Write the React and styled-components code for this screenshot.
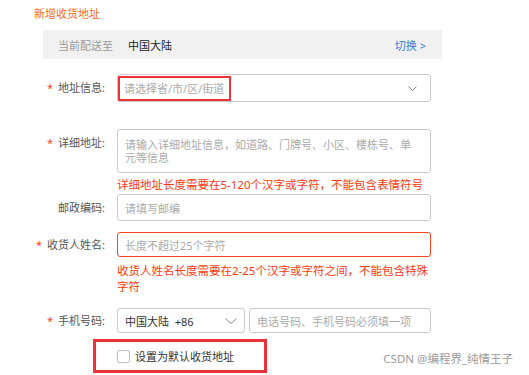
import React from 'react'
import styled, { createGlobalStyle } from 'styled-components'

const GlobalStyle = createGlobalStyle`
    body{
        margin: 0;
        background: #ffffff;
        font-family: "Noto Sans", "Noto Sans CJK SC", sans-serif;
    }
`

const Page = styled.div`
    position: relative;
    width: 529px;
    height: 375px;
    overflow: hidden;
    padding-top: 6px;
    box-sizing: border-box;
`

const Title = styled.h2`
    margin: 0 0 0 34px;
    font-size: 11px;
    line-height: 16px;
    font-weight: normal;
    color: #ff6a1a;
`

const ShipBar = styled.div`
    display: flex;
    align-items: center;
    margin: 8px 0 0 43px;
    width: 399px;
    height: 29px;
    padding: 0 16px 0 15px;
    box-sizing: border-box;
    background: #f1f1f1;
    font-size: 11px;
    .muted{ color: #999999; }
    .region{ color: #222222; margin-left: 15px; }
    .switch{ color: #3a7ed6; margin-left: auto; }
`

const Row = styled.div`
    display: flex;
    align-items: flex-start;
    margin-top: ${({top}) => top}px;
`

const Label = styled.label`
    width: 117px;
    flex-shrink: 0;
    padding-right: 12px;
    box-sizing: border-box;
    text-align: right;
    font-size: 11px;
    color: #555555;
    line-height: ${({lh}) => lh}px;
    .star{ color: #f5451f; margin-right: 5px; }
`

const Field = styled.div`
    width: 314px;
    display: flex;
    flex-direction: column;
`

const Box = styled.div`
    display: flex;
    align-items: center;
    height: ${({h}) => h}px;
    width: ${({w}) => (w ? `${w}px` : '100%')};
    box-sizing: border-box;
    border: 1px solid ${({error}) => (error ? '#f4471f' : '#c9c9d3')};
    border-radius: 3px;
    padding: 0 ${({pr}) => pr || 12}px 0 7px;
    font-size: 11px;
    color: #aaaaaa;
    background: #ffffff;
    .value{ color: #333333; white-space: pre; }
    svg{ margin-left: auto; }
`

const Marked = styled.span`
    align-self: flex-end;
    border: 2px solid #ea3438;
    padding: 3px 5px 2px 4px;
    margin: 0 0 0 -7px;
    line-height: 16px;
`

const TextArea = styled.textarea`
    width: 100%;
    height: 44px;
    box-sizing: border-box;
    border: 1px solid #c9c9d3;
    border-radius: 3px;
    padding: 8px 7px 0;
    resize: none;
    font-family: "Noto Sans", "Noto Sans CJK SC", sans-serif;
    font-size: 11px;
    line-height: 13px;
    &::placeholder{ color: #aaaaaa; }
`

const ErrorText = styled.p`
    margin: ${({mt}) => mt}px 0 0;
    font-size: 11.5px;
    line-height: 16px;
    color: #fa3a0e;
`

const PhoneLine = styled.div`
    display: flex;
    gap: 4px;
`

const DefaultRow = styled.div`
    display: flex;
    align-items: center;
    margin: 6px 0 0 93px;
    width: 174px;
    height: 34px;
    box-sizing: border-box;
    border: 3px solid #ec3238;
    padding-left: 21px;
    font-size: 11px;
    color: #333333;
`

const Check = styled.span`
    width: 13px;
    height: 13px;
    box-sizing: border-box;
    border: 1px solid #bdbdc6;
    border-radius: 2px;
    margin-right: 5px;
`

const Watermark = styled.div`
    position: absolute;
    right: 16px;
    bottom: 9px;
    font-size: 11.5px;
    color: #9a9a9a;
`

const Chevron = ({w = 8, h = 5}) => (
    <svg width={w} height={h} viewBox={`0 0 ${w} ${h}`}>
        <polyline points={`0.5,0.5 ${w / 2},${h - 0.5} ${w - 0.5},0.5`} fill="none" stroke="#8a8a8a" strokeWidth="1" />
    </svg>
)

export default function App() {
    return (
        <Page>
            <GlobalStyle />
            <Title>新增收货地址</Title>
            <ShipBar>
                <span className='muted'>当前配送至</span>
                <span className='region'>中国大陆</span>
                <span className='switch'>切换 &gt;</span>
            </ShipBar>

            <Row top={15}>
                <Label lh={28}><span className='star'>*</span>地址信息:</Label>
                <Field>
                    <Box h={28} pr={13}>
                        <Marked>请选择省/市/区/街道</Marked>
                        <Chevron w={9} h={5} />
                    </Box>
                </Field>
            </Row>

            <Row top={27}>
                <Label lh={28}><span className='star'>*</span>详细地址:</Label>
                <Field>
                    <TextArea placeholder={'请输入详细地址信息，如道路、门牌号、小区、楼栋号、单\n元等信息'} />
                    <ErrorText mt={4}>详细地址长度需要在5-120个汉字或字符，不能包含表情符号</ErrorText>
                </Field>
            </Row>

            <Row top={1}>
                <Label lh={27}>邮政编码:</Label>
                <Field>
                    <Box h={27}>请填写邮编</Box>
                </Field>
            </Row>

            <Row top={11}>
                <Label lh={25}><span className='star'>*</span>收货人姓名:</Label>
                <Field>
                    <Box h={25} error>长度不超过25个字符</Box>
                    <ErrorText mt={6}>收货人姓名长度需要在2-25个汉字或字符之间，不能包含特殊字符</ErrorText>
                </Field>
            </Row>

            <Row top={13}>
                <Label lh={25}><span className='star'>*</span>手机号码:</Label>
                <Field>
                    <PhoneLine>
                        <Box h={25} w={128} pr={7}>
                            <span className='value'>中国大陆  +86</span>
                            <Chevron w={12} h={6} />
                        </Box>
                        <Box h={25} w={182}>电话号码、手机号码必须填一项</Box>
                    </PhoneLine>
                </Field>
            </Row>

            <DefaultRow>
                <Check />
                设置为默认收货地址
            </DefaultRow>

            <Watermark>CSDN @编程界_纯情王子</Watermark>
        </Page>
    )
}
